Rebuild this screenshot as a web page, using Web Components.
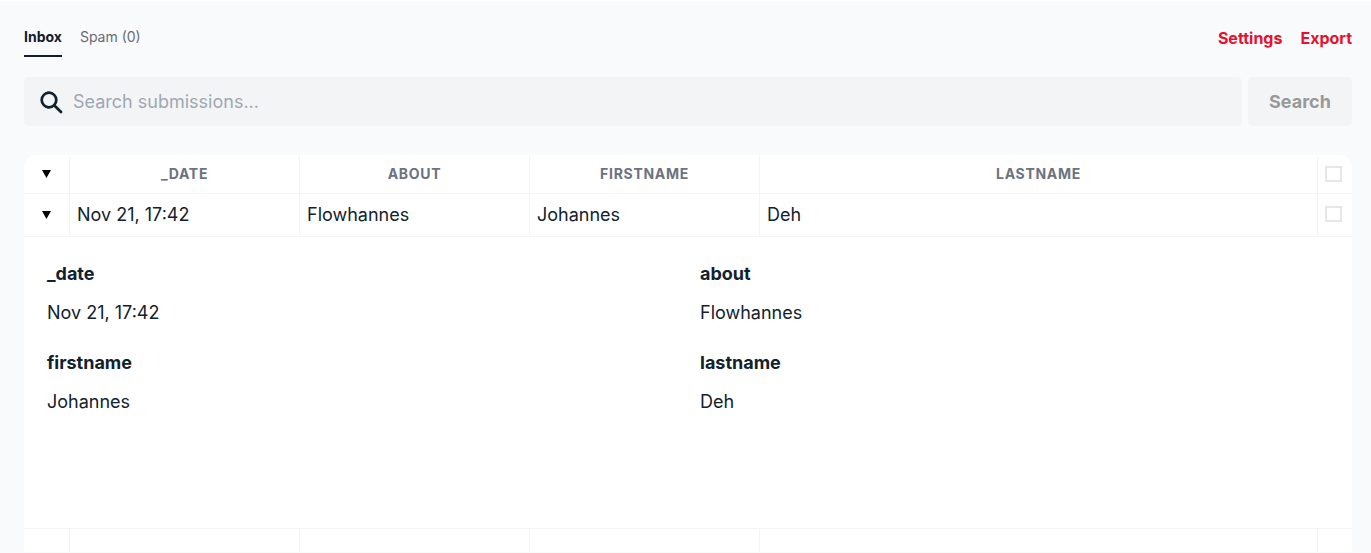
<!DOCTYPE html>
<html lang="en">
<head>
<meta charset="utf-8">
<meta name="viewport" content="width=device-width, initial-scale=1">
<title>Submissions</title>
<style>
  html { background: #f9fafc; }
  body {
    margin: 0;
    border-top: 1px solid #fff;
    font-family: Inter, "Liberation Sans", sans-serif;
    font-size: 18px;
    line-height: 28px;
    color: #10222e;
  }
</style>
</head>
<body>
<submissions-page></submissions-page>

<template id="page-template">
  <style>
    :host { display: block; padding: 21px 19px 0 24px; }
    header { display: flex; justify-content: space-between; align-items: flex-start; }
    submission-search { margin: 20px 0 29px; }
  </style>
  <header>
    <nav-tabs>
      <nav-tab current>Inbox</nav-tab>
      <nav-tab>Spam (0)</nav-tab>
    </nav-tabs>
    <action-links></action-links>
  </header>
  <main>
    <submission-search></submission-search>
    <submission-table></submission-table>
  </main>
</template>

<template id="tabs-template">
  <style>
    :host { display: block; }
    nav { display: flex; gap: 18px; }
  </style>
  <nav aria-label="Folders"><slot></slot></nav>
</template>

<template id="tab-template">
  <style>
    :host { display: block; }
    a {
      display: block;
      padding: 5px 0 8px;
      font-size: 14px;
      line-height: 20px;
      color: #676c73;
      text-decoration: none;
      border-bottom: 2px solid transparent;
    }
    :host([current]) a { font-weight: 700; color: #141b2c; border-color: #141b2c; }
  </style>
  <a href="#"><slot></slot></a>
</template>

<template id="actions-template">
  <style>
    :host { display: flex; gap: 18px; padding-top: 4px; }
    a { font-size: 16px; line-height: 24px; font-weight: 700; color: #e8112d; text-decoration: none; }
  </style>
  <a href="#settings">Settings</a>
  <a href="#export">Export</a>
</template>

<template id="search-template">
  <style>
    :host { display: block; }
    form { display: flex; gap: 6px; }
    label {
      flex: 1;
      display: flex;
      align-items: center;
      gap: 9px;
      height: 49px;
      padding-left: 15px;
      background: #f3f4f6;
      border-radius: 5px;
      box-sizing: border-box;
    }
    svg { width: 25px; height: 25px; flex: none; margin-top: 2px; }
    input {
      flex: 1;
      min-width: 0;
      padding: 0;
      border: 0;
      outline: 0;
      background: none;
      font: inherit;
      color: inherit;
    }
    input::placeholder { color: #a0a7b3; opacity: 1; }
    button {
      width: 104px;
      border: 0;
      border-radius: 5px;
      background: #f3f4f6;
      font: inherit;
      font-weight: 700;
      color: #999;
    }
  </style>
  <form role="search">
    <label>
      <svg viewBox="0 0 25 25" fill="none" stroke="#10222e" aria-hidden="true">
        <circle cx="10" cy="10" r="7.3" stroke-width="2.7"/>
        <path d="M15.4 15.4l6.600 6.600" stroke-width="2.8" stroke-linecap="round"/>
      </svg>
      <input type="text" placeholder="Search submissions..." aria-label="Search submissions">
    </label>
    <button type="submit">Search</button>
  </form>
</template>

<template id="table-template">
  <style>
    :host { display: block; background: #fff; border-radius: 12px 12px 0 0; }
    table { width: 100%; table-layout: fixed; border-collapse: separate; border-spacing: 0; }
    .toggle { width: 46px; }
    .field { width: 230px; }
    .pick { width: 34px; }
    th, td {
      padding: 0 7px;
      border-right: 1px solid #f3f4f6;
      border-bottom: 1px solid #f3f4f6;
      box-sizing: border-box;
    }
    th {
      height: 39px;
      font-size: 14px;
      line-height: 20px;
      font-weight: 700;
      letter-spacing: 0.05em;
      text-transform: uppercase;
      color: #6b7280;
    }
    td { height: 43px; text-align: left; }
    th:last-child, td:last-child { border-right: 0; }
    td:last-child { padding-bottom: 3px; }
    td.details { padding: 0; height: auto; }
    .next td { height: 23px; border-bottom: 0; }
    button { display: block; margin: 0 auto; padding: 4px; border: 0; background: none; }
    svg { display: block; width: 9px; height: 8px; }
    input {
      appearance: none;
      display: block;
      width: 17px;
      height: 16px;
      margin: 0;
      border: 2px solid #e6e6eb;
      background: #fff;
      box-sizing: border-box;
    }
    input:checked { background: #6b7280; }
  </style>
  <table>
    <colgroup>
      <col class="toggle"><col class="field"><col class="field"><col class="field"><col><col class="pick">
    </colgroup>
    <thead>
      <tr>
        <th><button type="button" aria-label="Toggle all"><svg viewBox="0 0 9 8"><path d="M0 0h9L4.500 8z"/></svg></button></th>
        <th scope="col">_date</th>
        <th scope="col">about</th>
        <th scope="col">firstname</th>
        <th scope="col">lastname</th>
        <th><input type="checkbox" aria-label="Select all"></th>
      </tr>
    </thead>
    <tbody>
      <tr>
        <td><button type="button" aria-label="Toggle submission"><svg viewBox="0 0 9 8"><path d="M0 0h9L4.500 8z"/></svg></button></td>
        <td>Nov 21, 17:42</td>
        <td>Flowhannes</td>
        <td>Johannes</td>
        <td>Deh</td>
        <td><input type="checkbox" aria-label="Select submission"></td>
      </tr>
      <tr>
        <td class="details" colspan="6">
          <submission-details>
            <detail-field name="_date">Nov 21, 17:42</detail-field>
            <detail-field name="about">Flowhannes</detail-field>
            <detail-field name="firstname">Johannes</detail-field>
            <detail-field name="lastname">Deh</detail-field>
          </submission-details>
        </td>
      </tr>
      <tr class="next"><td></td><td></td><td></td><td></td><td></td><td></td></tr>
    </tbody>
  </table>
</template>

<template id="details-template">
  <style>
    :host {
      display: grid;
      grid-template-columns: 1fr 1fr;
      align-content: start;
      gap: 22px 24px;
      min-height: 291px;
      padding: 23px 23px 0;
      box-sizing: border-box;
    }
  </style>
  <slot></slot>
</template>

<template id="field-template">
  <style>
    :host { display: block; }
    h2 { margin: 0 0 11px; font-size: 18px; line-height: 28px; font-weight: 700; }
    p { margin: 0; }
  </style>
  <h2></h2>
  <p><slot></slot></p>
</template>

<script>
  class TemplateElement extends HTMLElement {
    constructor() {
      super();
      const template = document.getElementById(this.constructor.template);
      this.attachShadow({ mode: "open" }).append(template.content.cloneNode(true));
    }
  }

  customElements.define("detail-field", class extends TemplateElement {
    static template = "field-template";
    connectedCallback() {
      this.shadowRoot.querySelector("h2").textContent = this.getAttribute("name");
    }
  });
  customElements.define("submission-details", class extends TemplateElement {
    static template = "details-template";
  });
  customElements.define("submission-table", class extends TemplateElement {
    static template = "table-template";
  });
  customElements.define("submission-search", class extends TemplateElement {
    static template = "search-template";
    connectedCallback() {
      this.shadowRoot.querySelector("form").addEventListener("submit", event => event.preventDefault());
    }
  });
  customElements.define("action-links", class extends TemplateElement {
    static template = "actions-template";
  });
  customElements.define("nav-tab", class extends TemplateElement {
    static template = "tab-template";
  });
  customElements.define("nav-tabs", class extends TemplateElement {
    static template = "tabs-template";
  });
  customElements.define("submissions-page", class extends TemplateElement {
    static template = "page-template";
  });
</script>
</body>
</html>
